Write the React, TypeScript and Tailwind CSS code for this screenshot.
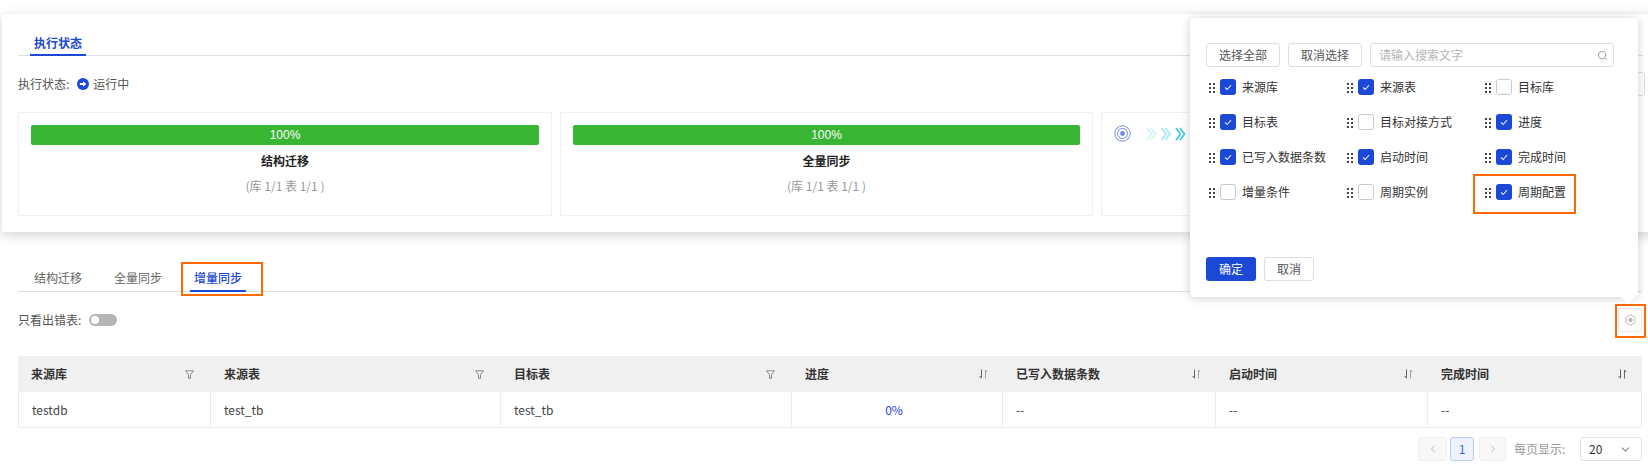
import { ChevronDown, ChevronLeft, ChevronRight, Search } from "lucide-react";

const font = "font-['Noto_Sans_CJK_SC','Liberation_Sans',sans-serif]";

function Grip() {
  return (
    <svg width="6" height="10" viewBox="0 0 6 10" className="shrink-0 mt-[2px]" fill="#444">
      <rect x="0" y="0" width="2" height="2" />
      <rect x="4" y="0" width="2" height="2" />
      <rect x="0" y="4" width="2" height="2" />
      <rect x="4" y="4" width="2" height="2" />
      <rect x="0" y="8" width="2" height="2" />
      <rect x="4" y="8" width="2" height="2" />
    </svg>
  );
}

function ColumnOption({ label, checked }: { label: string; checked: boolean }) {
  return (
    <div className="flex items-center h-[16px]">
      <Grip />
      <span
        className={
          checked
            ? "ml-[5px] w-[16px] h-[16px] rounded-[3px] bg-[#1b48d4] flex items-center justify-center shrink-0"
            : "ml-[5px] w-[16px] h-[16px] rounded-[3px] bg-white border border-[#c9c9cf] shrink-0"
        }
      >
        {checked && (
          <svg width="8" height="7" viewBox="0 0 8 7" fill="none">
            <path d="M1 3.5 L3.2 5.5 L7 1.2" stroke="#dfe6fb" strokeWidth="1.1" />
          </svg>
        )}
      </span>
      <span className="ml-[6px] text-[12px] leading-[16px] text-[#333] whitespace-nowrap">{label}</span>
    </div>
  );
}

function StepCard({ title }: { title: string }) {
  return (
    <div className="h-[104px] border border-[#f0f0f0] px-[12px] pt-[12px] text-center">
      <div className="h-[20px] rounded-[2px] bg-[#37b533] text-white text-[12px] leading-[20px] font-['Liberation_Sans',sans-serif]">
        100%
      </div>
      <div className="mt-[7px] h-[18px] text-[12px] leading-[18px] font-bold text-[#222]">{title}</div>
      <div className="mt-[7px] text-[12px] leading-[18px] text-[#999]">(库 1/1 表 1/1 )</div>
    </div>
  );
}

function FilterIcon() {
  return (
    <svg width="9" height="9" viewBox="0 0 9 9" fill="none" className="shrink-0 mr-[7px]">
      <path d="M0.5 0.8 H8.5 L5.5 4.6 V8.3 H3.5 V4.6 Z" stroke="#7b7f8a" strokeWidth="0.9" />
    </svg>
  );
}

function SortIcon({ dark }: { dark?: boolean }) {
  return (
    <svg width="9" height="10" viewBox="0 0 9 10" fill="none" className="shrink-0 mr-[5px]">
      <path d="M2.5 0.5 V9 M0.6 7 L2.5 9.2" stroke="#555" strokeWidth="0.9" />
      <path d="M6.5 9.5 V1 M6.5 1 L8.2 3" stroke={dark ? "#555" : "#9a9a9a"} strokeWidth="0.9" />
    </svg>
  );
}

const columns = [
  { title: "来源库", cell: "testdb", icon: "filter" },
  { title: "来源表", cell: "test_tb", icon: "filter" },
  { title: "目标表", cell: "test_tb", icon: "filter" },
  { title: "进度", cell: "0%", icon: "sort" },
  { title: "已写入数据条数", cell: "--", icon: "sort" },
  { title: "启动时间", cell: "--", icon: "sort" },
  { title: "完成时间", cell: "--", icon: "sortDark" },
];

const options = [
  { label: "来源库", checked: true },
  { label: "来源表", checked: true },
  { label: "目标库", checked: false },
  { label: "目标表", checked: true },
  { label: "目标对接方式", checked: false },
  { label: "进度", checked: true },
  { label: "已写入数据条数", checked: true },
  { label: "启动时间", checked: true },
  { label: "完成时间", checked: true },
  { label: "增量条件", checked: false },
  { label: "周期实例", checked: false },
  { label: "周期配置", checked: true },
];

export default function App() {
  return (
    <div className={`relative w-[1648px] h-[472px] overflow-hidden bg-white ${font}`}>
      {/* 执行状态 */}
      <div className="ml-[2px] mt-[14px] w-[1660px] h-[218px] bg-white shadow-[0_3px_12px_rgba(0,0,0,0.18)] pl-[16px] pt-[20px]">
        <div className="w-[1625px] h-[22px] border-b border-[#dedede] pl-[12px] flex">
          <div className="w-[56px] h-[22px] border-b-2 border-[#1b48d4] text-center text-[12px] leading-[18px] font-bold text-[#1b48d4]">
            执行状态
          </div>
        </div>
        <div className="mt-[18px] h-[20px] flex items-center text-[12px] text-[#555]">
          <span>执行状态:</span>
          <svg width="12" height="12" viewBox="0 0 12 12" className="ml-[8px]">
            <circle cx="6" cy="6" r="6" fill="#1b48d4" />
            <path d="M2.8 4.9 H6 V3.2 L9.4 6 L6 8.8 V7.1 H2.8 Z" fill="#fff" />
          </svg>
          <span className="ml-[4px]">运行中</span>
          <div className="ml-auto mr-[17px] w-[80px] h-[24px] rounded-[3px] border border-[#dedede]" />
        </div>
        <div className="mt-[18px] w-[1617px] grid grid-cols-[534px_533px_534px] gap-[8px]">
          <StepCard title="结构迁移" />
          <StepCard title="全量同步" />
          <div className="h-[104px] border border-[#f0f0f0] pl-[12px] pt-[12px] flex items-start">
            <svg width="17" height="17" viewBox="0 0 17 17" fill="none">
              <circle cx="8.5" cy="8.5" r="7.7" stroke="#6f88e2" strokeWidth="1" />
              <circle cx="8.5" cy="8.5" r="5" stroke="#6f88e2" strokeWidth="1" />
              <circle cx="8.5" cy="8.5" r="2.4" fill="#6f88e2" />
            </svg>
            <svg width="40" height="14" viewBox="0 0 40 14" fill="none" className="ml-[15px] mt-[2px]" strokeWidth="1.8">
              <path d="M1 1 L5.5 7 L1 13 M5 1 L9.5 7 L5 13" stroke="#d2f4fa" />
              <path d="M15.5 1 L20 7 L15.5 13 M19.5 1 L24 7 L19.5 13" stroke="#a5eaf6" />
              <path d="M30 1 L34.5 7 L30 13 M34 1 L38.5 7 L34 13" stroke="#40cfe8" />
            </svg>
          </div>
        </div>
      </div>

      {/* 同步明细 */}
      <div className="pl-[18px] pr-[6px]">
        <div className="mt-[31px] h-[29px] border-b border-[#dedede] flex pl-[12px] text-[12px] leading-[30px] text-[#666]">
          <div className="w-[56px] h-[29px] text-center">结构迁移</div>
          <div className="ml-[24px] w-[56px] h-[29px] text-center">全量同步</div>
          <div className="relative ml-[24px] w-[56px] h-[29px] border-b-2 border-[#1b48d4] text-center font-medium text-[#1b48d4]">
            增量同步
            <div className="absolute left-[-9px] top-[-1px] w-[82px] h-[34px] border-[2px] border-[#ff6a00]" />
          </div>
        </div>
        <div className="mt-[16px] h-[24px] flex items-center text-[12px] text-[#555]">
          <span>只看出错表:</span>
          <span className="ml-[8px] w-[28px] h-[12px] rounded-full bg-[#b5b5b5] flex items-center pl-[2px]">
            <span className="w-[8px] h-[8px] rounded-full bg-white" />
          </span>
          <div className="relative ml-auto mr-0 w-[24px] h-[24px] rounded-[3px] border border-[#e8e8e8] flex items-center justify-center">
            <svg width="11" height="12" viewBox="0 0 11 12" fill="none">
              <path d="M5.5 0.8 L10 3.4 V8.6 L5.5 11.2 L1 8.6 V3.4 Z" stroke="#b9b9b9" strokeWidth="1" />
              <circle cx="5.5" cy="6" r="2.2" fill="#b9b9b9" />
            </svg>
            <div className="absolute left-[-4px] top-[-5px] w-[31px] h-[34px] border-[2px] border-[#ff6a00]" />
          </div>
        </div>

        <div className="mt-[24px] w-[1624px] grid grid-cols-[193px_290px_291px_211px_213px_212px_214px] text-[12px]">
          {columns.map((col) => (
            <div key={col.title} className="h-[36px] bg-[#f0f0f0] pl-[13px] pr-[10px] flex items-center justify-between">
              <span className="font-bold text-[#333]">{col.title}</span>
              {col.icon === "filter" ? <FilterIcon /> : <SortIcon dark={col.icon === "sortDark"} />}
            </div>
          ))}
          {columns.map((col, i) => (
            <div
              key={col.title}
              className={`h-[36px] border-b border-r border-[#ececec] leading-[35px] ${i === 0 ? "border-l" : ""} ${
                i === 3 ? "text-center text-[#1b48d4] pr-[6px]" : "pl-[13px] text-[#444]"
              }`}
            >
              {col.cell}
            </div>
          ))}
        </div>

        <div className="mt-[9px] w-[1624px] flex items-center justify-end text-[12px]">
          <div className="w-[29px] h-[24px] rounded-[3px] border border-[#efefef] bg-[#f8f8f8] flex items-center justify-center">
            <ChevronLeft size={12} color="#bbb" />
          </div>
          <div className="ml-[3px] w-[24px] h-[24px] rounded-[3px] border border-[#b9c8f5] bg-[#edf2fd] text-center leading-[22px] text-[#3b66dc]">
            1
          </div>
          <div className="ml-[5px] w-[27px] h-[24px] rounded-[3px] border border-[#efefef] bg-[#f8f8f8] flex items-center justify-center">
            <ChevronRight size={12} color="#bbb" />
          </div>
          <span className="ml-[8px] w-[66px] text-[#999]">每页显示:</span>
          <div className="w-[62px] h-[24px] rounded-[3px] border border-[#e2e2e2] flex items-center justify-between pl-[8px] pr-[9px] text-[#333]">
            <span>20</span>
            <ChevronDown size={13} color="#888" />
          </div>
        </div>
      </div>

      {/* 自定义列 */}
      <div className="absolute left-[1190px] top-[18px] w-[448px] h-[279px] rounded-[4px] bg-white shadow-[0_1px_10px_rgba(0,0,0,0.2)] pl-[16px] pr-[24px] pt-[25px]">
        <div className="flex gap-[8px] text-[12px] text-[#555]">
          <div className="w-[74px] h-[24px] rounded-[3px] border border-[#dedede] text-center leading-[22px]">选择全部</div>
          <div className="w-[74px] h-[24px] rounded-[3px] border border-[#dedede] text-center leading-[22px]">取消选择</div>
          <div className="w-[244px] h-[24px] rounded-[3px] border border-[#dedede] flex items-center justify-between pl-[8px] pr-[5px] text-[#b5b5b5]">
            <span>请输入搜索文字</span>
            <Search size={11} color="#999" />
          </div>
        </div>
        <div className="mt-[12px] ml-[3px] grid grid-cols-[138px_138px_138px] gap-y-[19px]">
          {options.map((o) => (
            <ColumnOption key={o.label} label={o.label} checked={o.checked} />
          ))}
        </div>
        <div className="mt-[57px] flex gap-[8px] text-[12px]">
          <div className="w-[50px] h-[24px] rounded-[3px] bg-[#1b48d4] text-white text-center leading-[24px]">确定</div>
          <div className="w-[50px] h-[24px] rounded-[3px] border border-[#dedede] text-[#555] text-center leading-[22px]">取消</div>
        </div>
        <div className="absolute left-[283px] top-[156px] w-[103px] h-[40px] border-[2px] border-[#ff6a00]" />
        <div className="absolute left-[433px] bottom-[-5px] w-[10px] h-[10px] rotate-45 bg-white" />
      </div>
    </div>
  );
}
